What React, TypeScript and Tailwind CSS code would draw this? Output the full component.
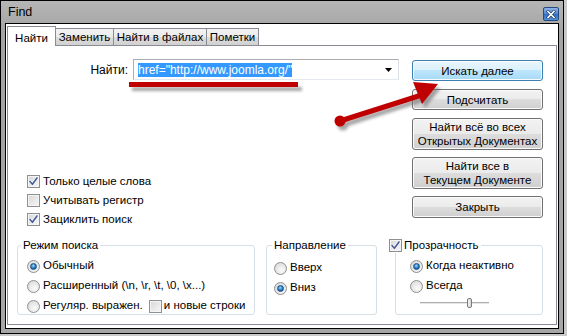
import React from "react";

const FONT = "font-['Liberation_Sans',Arial,sans-serif]";

function Check({ on }: { on?: boolean }) {
  return (
    <span className="relative inline-flex h-[13px] w-[13px] shrink-0 border border-[#8e8f8f] bg-[linear-gradient(135deg,#d8d8d8,#f6f6f6)] shadow-[inset_0_0_0_1px_#f4f4f4]">
      {on && (
        <svg viewBox="0 0 11 11" className="absolute inset-0 h-[11px] w-[11px]">
          <path d="M2 5.5 L4.4 8.3 L9 2" fill="none" stroke="#fff" strokeWidth="3" strokeLinecap="round" strokeLinejoin="round" />
          <path d="M2 5.5 L4.4 8.3 L9 2" fill="none" stroke="#4a5d9b" strokeWidth="1.7" strokeLinecap="round" strokeLinejoin="round" />
        </svg>
      )}
    </span>
  );
}

function Radio({ on }: { on?: boolean }) {
  return (
    <span className="inline-flex h-[13px] w-[13px] shrink-0 items-center justify-center rounded-full border border-[#8e8f8f] bg-[radial-gradient(circle_at_60%_65%,#fbfbfb,#d4d4d4)]">
      {on && (
        <span className="h-[7px] w-[7px] rounded-full border border-[#1b4f86] bg-[radial-gradient(circle_at_45%_35%,#9adcfb,#1a6fb8_60%,#0c4a8a)]" />
      )}
    </span>
  );
}

function Btn({ children, def, h }: { children: React.ReactNode; def?: boolean; h: string }) {
  return (
    <div
      className={`flex w-full items-center justify-center rounded-[3px] border text-center text-[11.5px] leading-[14px] text-black shadow-[inset_0_0_0_1px_#fbfbfb] ${h} ${
        def
          ? "border-[#3c7fb1] bg-[linear-gradient(#eaf6fd,#d9f0fc_50%,#bee6fd_50%,#a7d9f5)]"
          : "border-[#707070] bg-[linear-gradient(#f2f2f2,#ebebeb_50%,#dddddd_50%,#cfcfcf)]"
      }`}
    >
      {children}
    </div>
  );
}

function Tab({ label, active, w }: { label: string; active?: boolean; w: string }) {
  if (active)
    return (
      <div className={`relative z-10 flex h-[20px] ${w} items-start justify-center border border-b-0 border-[#898c95] bg-white pt-[3px] text-[11.5px]`}>
        {label}
      </div>
    );
  return (
    <div className={`-ml-px flex h-[18px] ${w} items-center justify-center border border-b-0 border-[#898c95] bg-[linear-gradient(#f2f2f2,#ebebeb_50%,#dddddd_50%,#cfcfcf)] pt-[1px] text-[11.5px]`}>
      {label}
    </div>
  );
}

export default function App() {
  return (
    <div className={`relative h-[336px] w-[567px] bg-[#c9c9c9] ${FONT} text-black`}>
      <div className="flex h-[334px] w-[564px] flex-col border border-black bg-[linear-gradient(#b6b6b6,#a4a4a4_30px,#a6a6a6)] px-[4px] pb-[4px]">
        {/* title bar */}
        <div className="flex h-[22px] items-center pl-[3px]">
          <span className="text-[12.5px] text-black">Find</span>
          <div className="ml-auto mt-[4px] flex h-[14px] w-[16px] items-center justify-center rounded-[2px] border border-[#274a7d] bg-[linear-gradient(#8fb6ea,#4a82d0_50%,#2f6cc3_50%,#5590dc)]">
            <svg viewBox="0 0 10 9" className="h-[9px] w-[10px]">
              <path d="M2 1.5 L8 7.5 M8 1.5 L2 7.5" stroke="#1d3b66" strokeWidth="3" strokeLinecap="square" />
              <path d="M2 1.5 L8 7.5 M8 1.5 L2 7.5" stroke="#fff" strokeWidth="1.6" strokeLinecap="square" />
            </svg>
          </div>
        </div>

        {/* client */}
        <div className="flex flex-1 flex-col border border-black bg-white px-[1px] pb-[3px] pt-[2px]">
          <div className="flex h-[20px] items-end">
            <Tab label="Найти" active w="w-[49px]" />
            <Tab label="Заменить" w="w-[59px]" />
            <Tab label="Найти в файлах" w="w-[94px]" />
            <Tab label="Пометки" w="w-[53px]" />
          </div>

          <div className="-mt-px flex flex-1 flex-col border border-[#898c95] pl-[9px] pt-[13px] text-[11.5px]">
            <div className="flex h-[170px]">
              <div className="flex w-[382px] flex-col justify-between">
                <div className="flex h-[21px] items-center justify-end gap-[5px]">
                  <span className="text-[12px]">Найти:</span>
                  <div className="flex h-[21px] w-[266px] items-center border border-[#abadb3] border-b-[#e3e9ef] border-r-[#dbdfe6] pl-[4px] pr-[4px]">
                    <span className="bg-[#3399ff] text-[12px] leading-[14px] text-white">href="http://www.joomla.org/"</span>
                    <svg viewBox="0 0 7 4" className="ml-auto mr-[2px] h-[4px] w-[7px]">
                      <path d="M0 0 H7 L3.5 4 Z" fill="#000" />
                    </svg>
                  </div>
                </div>
                <div className="ml-[10px] flex flex-col">
                  <label className="flex h-[19px] items-center gap-[3px]">
                    <Check on />
                    <span>Только целые слова</span>
                  </label>
                  <label className="flex h-[19px] items-center gap-[3px]">
                    <Check />
                    <span>Учитывать регистр</span>
                  </label>
                  <label className="flex h-[19px] items-center gap-[3px]">
                    <Check on />
                    <span>Зациклить поиск</span>
                  </label>
                </div>
              </div>

              <div className="ml-[13px] flex w-[131px] flex-col">
                <div className="mt-[1px]">
                  <Btn def h="h-[21px]">Искать далее</Btn>
                </div>
                <div className="mt-[8px]">
                  <Btn h="h-[21px]">Подсчитать</Btn>
                </div>
                <div className="mt-[8px]">
                  <Btn h="h-[32px]">
                    Найти всё во всех
                    <br />
                    Открытых Документах
                  </Btn>
                </div>
                <div className="mt-[7px]">
                  <Btn h="h-[32px]">
                    Найти все в
                    <br />
                    Текущем Документе
                  </Btn>
                </div>
                <div className="mt-[7px]">
                  <Btn h="h-[22px]">Закрыть</Btn>
                </div>
              </div>
            </div>

            <div className="mt-[8px] flex">
              <fieldset className="h-[78px] w-[238px] rounded-[3px] border border-[#d5dfe5] pl-[9px] pt-[3px]">
                <legend className="-ml-[6px] px-[2px] leading-[16px]">Режим поиска</legend>
                <label className="flex h-[20px] items-center gap-[3px]">
                  <Radio on />
                  <span>Обычный</span>
                </label>
                <label className="flex h-[20px] items-center gap-[3px]">
                  <Radio />
                  <span>Расширенный (\n, \r, \t, \0, \x...)</span>
                </label>
                <div className="flex h-[20px] items-center whitespace-nowrap">
                  <label className="flex items-center gap-[3px]">
                    <Radio />
                    <span>Регуляр. выражен.</span>
                  </label>
                  <label className="ml-[6px] flex items-center gap-[2px]">
                    <Check />
                    <span>и новые строки</span>
                  </label>
                </div>
              </fieldset>

              <fieldset className="ml-[11px] h-[78px] w-[111px] rounded-[3px] border border-[#d5dfe5] pl-[7px] pt-[5px]">
                <legend className="-ml-[2px] px-[2px] leading-[16px]">Направление</legend>
                <label className="flex h-[20px] items-center gap-[3px]">
                  <Radio />
                  <span>Вверх</span>
                </label>
                <label className="flex h-[20px] items-center gap-[3px]">
                  <Radio on />
                  <span>Вниз</span>
                </label>
              </fieldset>

              <fieldset className="ml-[18px] h-[78px] w-[148px] rounded-[3px] border border-[#d5dfe5] pl-[14px] pt-[3px]">
                <legend className="-ml-[21px] flex items-center gap-[2px] pr-[2px] leading-[16px]">
                  <Check on />
                  <span>Прозрачность</span>
                </legend>
                <label className="flex h-[20px] items-center gap-[3px]">
                  <Radio on />
                  <span>Когда неактивно</span>
                </label>
                <label className="flex h-[20px] items-center gap-[3px]">
                  <Radio />
                  <span>Всегда</span>
                </label>
                <div className="relative ml-[10px] mt-[1px] h-[12px] w-[69px]">
                  <div className="absolute left-0 right-0 top-[5px] h-[2px] border-t border-[#b0b0b0] bg-[#e6e6e6]" />
                  <div className="absolute left-[47px] top-[1px] h-[10px] w-[5px] rounded-[2px] border border-[#7a7a7a] bg-[linear-gradient(90deg,#f4f4f4,#d6d6d6)]" />
                </div>
              </fieldset>
            </div>
          </div>
        </div>
      </div>

      {/* red annotation overlay */}
      <svg className="pointer-events-none absolute inset-0" width="567" height="336" viewBox="0 0 567 336">
        <defs>
          <filter id="sh" x="-20%" y="-50%" width="140%" height="200%">
            <feGaussianBlur stdDeviation="1.6" />
          </filter>
        </defs>
        <g filter="url(#sh)" fill="#6d6d6d" stroke="#6d6d6d" opacity="0.6">
          <rect x="132" y="87" width="170" height="4" stroke="none" />
          <line x1="343" y1="125" x2="430" y2="97" strokeWidth="5" />
          <circle cx="343" cy="125" r="5.5" stroke="none" />
          <polygon points="416,86 441,88 425,108" stroke="none" />
        </g>
        <rect x="129" y="82" width="169" height="5" fill="#c00000" />
        <line x1="340" y1="121" x2="428" y2="93" stroke="#c00000" strokeWidth="5" />
        <circle cx="340" cy="121" r="5.5" fill="#c00000" />
        <polygon points="413,82 438,84 422,104" fill="#c00000" />
      </svg>
    </div>
  );
}
